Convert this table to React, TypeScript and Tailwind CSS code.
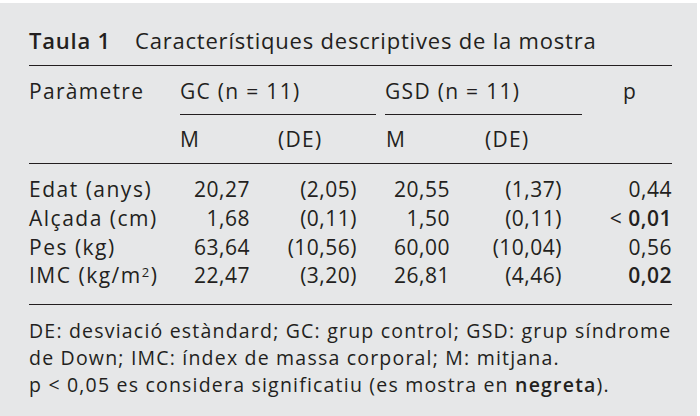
import React from "react";

type Row = {
  label: React.ReactNode;
  gcM: string;
  gcDe: string;
  gsdM: string;
  gsdDe: string;
  p: React.ReactNode;
};

const rows: Row[] = [
  { label: "Edat (anys)", gcM: "20,27", gcDe: "(2,05)", gsdM: "20,55", gsdDe: "(1,37)", p: "0,44" },
  {
    label: "Alçada (cm)",
    gcM: "1,68",
    gcDe: "(0,11)",
    gsdM: "1,50",
    gsdDe: "(0,11)",
    p: (
      <>
        &lt; <b className="font-semibold">0,01</b>
      </>
    ),
  },
  { label: "Pes (kg)", gcM: "63,64", gcDe: "(10,56)", gsdM: "60,00", gsdDe: "(10,04)", p: "0,56" },
  {
    label: (
      <>
        IMC (kg/m<sup className="text-[13px]">2</sup>)
      </>
    ),
    gcM: "22,47",
    gcDe: "(3,20)",
    gsdM: "26,81",
    gsdDe: "(4,46)",
    p: <b className="font-semibold">0,02</b>,
  },
];

const grid = "grid grid-cols-[151px_72px_133px_67px_130px_90px]";

export default function App() {
  return (
    <div className="h-[416px] w-[700px] bg-white pt-[3px] pr-[3px]">
      <div
        className="h-full bg-[#e6e7e8] pl-[29px] pr-[25px] pt-[22px] text-[#231f20]"
        style={{ fontFamily: "'Open Sans', sans-serif" }}
      >
        {/* title */}
        <div className="border-b border-[#231f20] pb-[10px] text-[22px] leading-[30px] tracking-[0.8px]">
          <b className="font-semibold">Taula 1</b>
          <span className="ml-[24px]">Característiques descriptives de la mostra</span>
        </div>

        {/* header */}
        <div className={`${grid} text-[21px] leading-[29px] tracking-[1.3px]`}>
          <div className="pt-[11px]">Paràmetre</div>
          <div className="col-span-2 mr-[9px] border-b border-[#231f20] pt-[11px] pb-[8px]">GC (n = 11)</div>
          <div className="col-span-2 border-b border-[#231f20] pt-[11px] pb-[8px]">GSD (n = 11)</div>
          <div className="pl-[41px] pt-[11px]">p</div>
        </div>
        <div className={`${grid} border-b border-[#231f20] pt-[10px] pb-[9px] text-[21px] leading-[29px] tracking-[1.3px]`}>
          <div />
          <div>M</div>
          <div className="pl-[26px]">(DE)</div>
          <div className="pl-[1px]">M</div>
          <div className="pl-[33px]">(DE)</div>
          <div />
        </div>

        {/* body */}
        <div className="border-b border-[#231f20] pt-[11px] pb-[14px] text-[21px] leading-[28.8px]">
          {rows.map((r, i) => (
            <div key={i} className={grid}>
              <div className="tracking-[1.5px]">{r.label}</div>
              <div className="pr-[2px] text-right tracking-[0.5px]">{r.gcM}</div>
              <div className="pr-[28px] text-right tracking-[0.5px]">{r.gcDe}</div>
              <div className="pr-[2px] text-right tracking-[0.5px]">{r.gsdM}</div>
              <div className="pr-[20px] text-right tracking-[0.5px]">{r.gsdDe}</div>
              <div className="text-right tracking-[0.5px]">{r.p}</div>
            </div>
          ))}
        </div>

        {/* notes */}
        <div className="pt-[13px] text-[19.5px] leading-[26.7px] tracking-[1.2px]">
          <p>
            DE: desviació estàndard; GC: grup control; GSD: grup síndrome
            <br />
            de Down; IMC: índex de massa corporal; M: mitjana.
          </p>
          <p>
            p &lt; 0,05 es considera significatiu (es mostra en <b className="font-semibold">negreta</b>).
          </p>
        </div>
      </div>
    </div>
  );
}
